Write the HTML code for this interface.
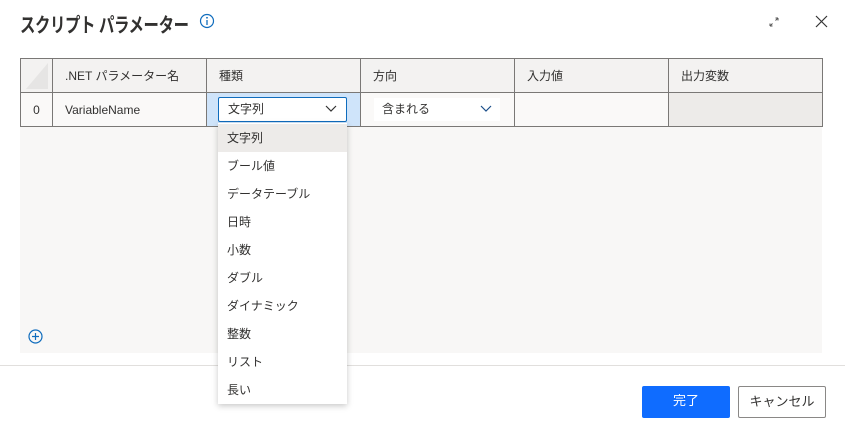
<!DOCTYPE html>
<html><head><meta charset="utf-8"><style>
*{box-sizing:border-box;margin:0;padding:0}
body{width:845px;height:437px;background:#fff;font-family:"Liberation Sans","Noto Sans CJK JP",sans-serif;color:#323130;position:relative;overflow:hidden;font-size:12px}
.abs{position:absolute}
.title{left:20px;top:9px;font-size:20px;font-weight:bold;letter-spacing:-0.5px;transform:scaleX(0.77);transform-origin:left top;white-space:nowrap}
.grey{left:20px;top:126px;width:802px;height:227px;background:#f8f7f6}
table{position:absolute;left:20px;top:58px;border-collapse:collapse;table-layout:fixed}
td{border:1px solid #7a7876;height:34px;padding-left:12px;font-size:12px}
tr.h td{background:#f3f2f1;height:34px}
tr.r td{background:#faf9f8}
.dd{left:218px;top:123px;width:129px;height:281px;background:#fff;box-shadow:0 2px 6px rgba(0,0,0,.22);z-index:5}
.dd div{height:28px;line-height:28px;padding-left:9px;font-size:12px}
.btn{top:386px;height:32px;border-radius:2px;font-size:13px;text-align:center;line-height:30px}
</style></head><body>
<div class="abs title">スクリプト パラメーター</div>
<svg class="abs" style="left:199px;top:13px" width="16" height="16"><circle cx="8" cy="8" r="6.5" fill="none" stroke="#0f6cbd" stroke-width="1.2"/><line x1="8" y1="7" x2="8" y2="12" stroke="#0f6cbd" stroke-width="1.3"/><circle cx="8" cy="4.8" r=".9" fill="#0f6cbd"/></svg>
<svg class="abs" style="left:768px;top:16px" width="12" height="12"><path d="M2 10L4.5 7.5M10 2L7.5 4.5M2 10v-2.5M2 10h2.5M10 2h-2.5M10 2v2.5" stroke="#555" stroke-width="1" fill="none"/></svg>
<svg class="abs" style="left:815px;top:15px" width="13" height="13"><path d="M1 1L12 12M12 1L1 12" stroke="#333" stroke-width="1.2"/></svg>
<div class="abs grey"></div>
<table>
<colgroup><col style="width:32px"><col style="width:154px"><col style="width:154px"><col style="width:154px"><col style="width:154px"><col style="width:154px"></colgroup>
<tr class="h"><td style="padding:0;position:relative"><svg width="30" height="32" style="position:absolute;left:2px;top:1px"><polygon points="25,3 25,29 3,29" fill="#e6e5e4"/></svg></td><td>.NET パラメーター名</td><td>種類</td><td>方向</td><td>入力値</td><td>出力変数</td></tr>
<tr class="r"><td style="padding:0;text-align:center">0</td><td>VariableName</td><td style="background:#cfe4fa;padding:0;position:relative"><div style="position:absolute;left:11px;top:4px;width:129px;height:25px;background:#fff;border:1px solid #0f6cbd;border-radius:2px;padding-left:9px;line-height:23px">文字列<svg style="position:absolute;right:9px;top:7px" width="12" height="8"><path d="M1 1l5 5 5-5" stroke="#333" fill="none" stroke-width="1.2"/></svg></div></td><td style="padding:0;position:relative"><div style="position:absolute;left:13px;top:5px;width:126px;height:23px;background:#fff;padding-left:8px;line-height:23px">含まれる<svg style="position:absolute;right:8px;top:7px" width="12" height="8"><path d="M1 1l5 5 5-5" stroke="#1b4f8a" fill="none" stroke-width="1.2"/></svg></div></td><td></td><td style="background:#edebe9"></td></tr>
</table>
<div class="abs" style="left:0;top:365px;width:845px;height:1px;background:#e1dfdd"></div>
<div class="abs dd">
<div style="background:#edebe9;margin-top:1px">文字列</div><div>ブール値</div><div>データテーブル</div><div>日時</div><div>小数</div><div>ダブル</div><div>ダイナミック</div><div>整数</div><div>リスト</div><div>長い</div>
</div>
<svg class="abs" style="left:28px;top:329px" width="15" height="15"><circle cx="7.5" cy="7.5" r="6.5" fill="none" stroke="#0f6cbd" stroke-width="1.2"/><path d="M7.5 4v7M4 7.5h7" stroke="#0f6cbd" stroke-width="1.2"/></svg>
<div class="abs btn" style="left:642px;width:88px;background:#0f6cff;color:#fff">完了</div>
<div class="abs btn" style="left:738px;width:88px;border:1px solid #8a8886;background:#fff">キャンセル</div>
</body></html>
